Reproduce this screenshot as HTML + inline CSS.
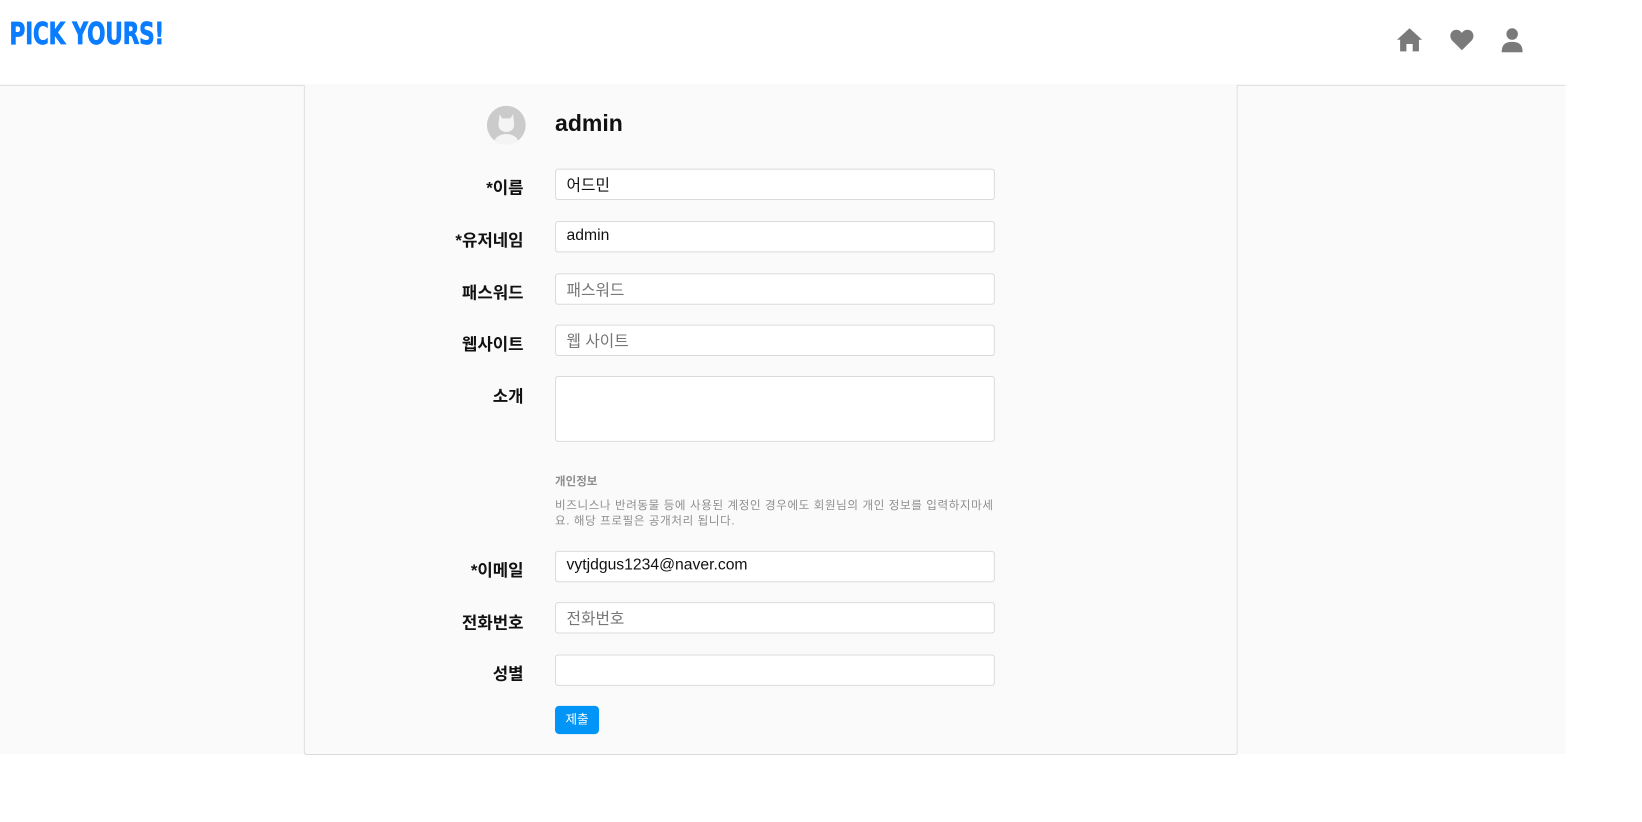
<!DOCTYPE html>
<html><head><meta charset="utf-8"><style>
*{box-sizing:border-box;margin:0;padding:0}
body{width:1642px;height:822px;background:#fff;font-family:"Liberation Sans","Noto Sans CJK KR",sans-serif;position:relative;overflow:hidden}
#w{position:absolute;left:0;top:0;width:1568px;height:785px;transform:scale(1.0472);transform-origin:0 0}
.hdr{position:absolute;left:0;top:0;width:1495px;height:82px;border-bottom:1px solid #dbdbdb;background:#fff}
.logo{position:absolute;left:9px;top:15px;font-size:29px;font-weight:900;color:#0a7cff;letter-spacing:-0.5px;font-family:"DejaVu Sans","Liberation Sans",sans-serif;transform:scaleX(0.72);transform-origin:left;-webkit-text-stroke:0.6px #0a7cff}
.bg{position:absolute;left:0;top:82px;width:1495px;height:638px;background:#fafafa}
.card{position:absolute;left:290px;top:81px;width:892px;height:640px;border:1px solid #dbdbdb;border-top:none;border-radius:0 0 3px 3px;background:#fafafa}
.lbl{position:absolute;left:300px;width:200px;font-size:16px;font-weight:bold;color:#111;text-align:right;white-space:nowrap}
.inp{position:absolute;left:530px;width:420px;height:30px;border:1px solid #dbdbdb;border-radius:3px;background:#fff;font-size:15px;padding:4px 10px;color:#111}
.ph{color:#777}
</style></head><body><div id="w">
<div class="hdr"><div class="logo">PICK YOURS!</div>
<svg style="position:absolute;left:1333px;top:26px" width="26" height="24" viewBox="0 0 26 24"><path d="M13 1 L1 12 L4 12 L4 23 L10 23 L10 16 L16 16 L16 23 L22 23 L22 12 L25 12 Z" fill="#7a7a7a"/></svg>
<svg style="position:absolute;left:1384px;top:27px" width="24" height="22" viewBox="0 0 24 22"><path d="M12 21 L2.5 11.5 C-0.5 8 1 2 6 1.5 C9 1.2 11 3 12 4.5 C13 3 15 1.2 18 1.5 C23 2 24.5 8 21.5 11.5 Z" fill="#7a7a7a"/></svg>
<svg style="position:absolute;left:1433px;top:26px" width="22" height="24" viewBox="0 0 22 24"><circle cx="11" cy="6.5" r="5.5" fill="#7a7a7a"/><path d="M1 24 C1 16 5 14 11 14 C17 14 21 16 21 24 Z" fill="#7a7a7a"/></svg>
</div>
<div class="bg"></div>
<div class="card"></div>
<svg style="position:absolute;left:465px;top:101px" width="37" height="37" viewBox="0 0 37 37"><defs><clipPath id="c"><circle cx="18.5" cy="18.5" r="18.5"/></clipPath></defs><circle cx="18.5" cy="18.5" r="18.5" fill="#cbcbcb"/><g clip-path="url(#c)" fill="#f4f4f4"><path d="M12 8 L14.5 12 L22.5 12 L25 8 L26 18 C26 23 22 25 18.5 25 C15 25 11 23 11 18 Z"/><ellipse cx="18.5" cy="36" rx="12" ry="9"/></g></svg>
<div style="position:absolute;left:530px;top:105px;font-size:22px;font-weight:bold;color:#111">admin</div>

<div class="lbl" style="top:166px">*이름</div><div class="inp" style="top:161px">어드민</div>
<div class="lbl" style="top:216px">*유저네임</div><div class="inp" style="top:211px">admin</div>
<div class="lbl" style="top:266px">패스워드</div><div class="inp ph" style="top:261px">패스워드</div>
<div class="lbl" style="top:315px">웹사이트</div><div class="inp ph" style="top:310px">웹 사이트</div>
<div class="lbl" style="top:365px">소개</div><div class="inp" style="top:359px;height:63px"></div>
<div style="position:absolute;left:530px;top:451px;font-size:11px;font-weight:bold;color:#8e8e8e">개인정보</div>
<div style="position:absolute;left:530px;top:476px;width:420px;font-size:11px;line-height:15px;color:#8e8e8e;letter-spacing:0.6px">비즈니스나 반려동물 등에 사용된 계정인 경우에도 회원님의 개인 정보를 입력하지마세요. 해당 프로필은 공개처리 됩니다.</div>
<div class="lbl" style="top:531px">*이메일</div><div class="inp" style="top:526px">vytjdgus1234@naver.com</div>
<div class="lbl" style="top:581px">전화번호</div><div class="inp ph" style="top:575px">전화번호</div>
<div class="lbl" style="top:630px">성별</div><div class="inp" style="top:625px"></div>
<div style="position:absolute;left:530px;top:674px;width:42px;height:27px;background:#0095f6;border-radius:4px;color:#fff;font-size:12px;text-align:center;line-height:27px">제출</div>
</div></body></html>
